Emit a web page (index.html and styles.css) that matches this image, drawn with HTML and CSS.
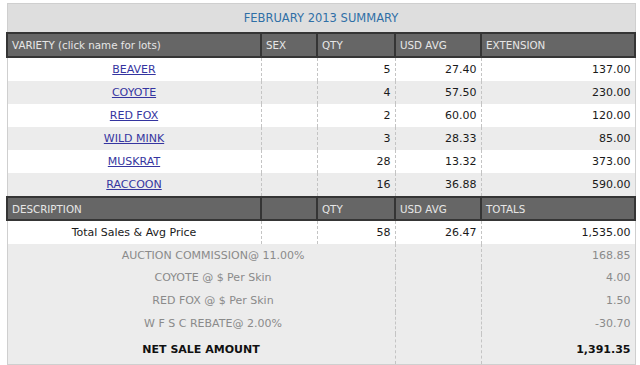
FILE: index.html
```html
<!DOCTYPE html>
<html>
<head>
<meta charset="utf-8">
<link rel="stylesheet" href="styles.css">
</head>
<body>
<div class="page">
<table class="summary">
  <colgroup>
    <col class="c-var"><col class="c-sex"><col class="c-qty"><col class="c-avg"><col class="c-ext">
  </colgroup>
  <tr class="title-row"><td colspan="5">FEBRUARY 2013 SUMMARY</td></tr>
  <tr class="head-row">
    <th>VARIETY (click name for lots)</th><th>SEX</th><th>QTY</th><th>USD AVG</th><th>EXTENSION</th>
  </tr>
  <tr class="row"><td class="name"><a href="#">BEAVER</a></td><td></td><td class="num">5</td><td class="num">27.40</td><td class="num">137.00</td></tr>
  <tr class="row alt"><td class="name"><a href="#">COYOTE</a></td><td></td><td class="num">4</td><td class="num">57.50</td><td class="num">230.00</td></tr>
  <tr class="row"><td class="name"><a href="#">RED FOX</a></td><td></td><td class="num">2</td><td class="num">60.00</td><td class="num">120.00</td></tr>
  <tr class="row alt"><td class="name"><a href="#">WILD MINK</a></td><td></td><td class="num">3</td><td class="num">28.33</td><td class="num">85.00</td></tr>
  <tr class="row"><td class="name"><a href="#">MUSKRAT</a></td><td></td><td class="num">28</td><td class="num">13.32</td><td class="num">373.00</td></tr>
  <tr class="row alt"><td class="name"><a href="#">RACCOON</a></td><td></td><td class="num">16</td><td class="num">36.88</td><td class="num">590.00</td></tr>
  <tr class="head-row head-row2">
    <th>DESCRIPTION</th><th></th><th>QTY</th><th>USD AVG</th><th>TOTALS</th>
  </tr>
  <tr class="row total"><td class="name">Total Sales &amp; Avg Price</td><td></td><td class="num">58</td><td class="num">26.47</td><td class="num">1,535.00</td></tr>
  <tr class="row foot"><td colspan="3" class="fdesc">AUCTION COMMISSION@ 11.00%</td><td></td><td class="num">168.85</td></tr>
  <tr class="row foot"><td colspan="3" class="fdesc">COYOTE @ $ Per Skin</td><td></td><td class="num">4.00</td></tr>
  <tr class="row foot"><td colspan="3" class="fdesc">RED FOX @ $ Per Skin</td><td></td><td class="num">1.50</td></tr>
  <tr class="row foot"><td colspan="3" class="fdesc">W F S C REBATE@ 2.00%</td><td></td><td class="num">-30.70</td></tr>
  <tr class="row foot net"><td colspan="3" class="fdesc">NET SALE AMOUNT</td><td></td><td class="num">1,391.35</td></tr>
</table>
</div>
</body>
</html>
```
FILE: styles.css
```css
html, body {
  margin: 0;
  padding: 0;
  background: #ffffff;
}
body {
  font-family: "DejaVu Sans", Verdana, sans-serif;
  font-size: 11px;
  color: #1a1a1a;
}
.page {
  padding: 3px 6px 0 6px;
}
.summary {
  width: 628px;
  border-collapse: collapse;
  table-layout: fixed;
  border: 1px solid #cfcfcf;
}
.c-var { width: 254px; }
.c-sex { width: 56px; }
.c-qty { width: 78px; }
.c-avg { width: 86px; }
.c-ext { width: 154px; }

.title-row td {
  height: 28px;
  padding: 0;
  background: #dedede;
  color: #2f6fa6;
  text-align: center;
  font-size: 11.5px;
  border-bottom: 1px solid #cfcfcf;
}
.head-row th {
  height: 22px;
  padding: 0 0 0 4px;
  background: #666666;
  color: #e6e6e6;
  font-weight: normal;
  font-size: 10.3px;
  text-align: left;
  border: 2px solid #353535;
}
.head-row2 th {
  height: 21px;
}
.row td {
  height: 23px;
  padding: 0 4px;
  background: #ffffff;
  border-right: 1px dashed #c4c4c4;
  white-space: nowrap;
}
.row td:last-child {
  border-right: 1px solid #cfcfcf;
}
.row.alt td {
  background: #ececec;
}
.row.total td {
  height: 23px;
}
.name {
  text-align: center;
}
.name a {
  color: #3535a0;
  text-decoration: underline;
}
.num {
  text-align: right;
}
.foot td {
  background: #ececec;
  color: #8a8a8a;
  height: 22.6px;
}
.foot .fdesc {
  text-align: center;
  padding-left: 28px;
}
.foot.net td {
  height: 30px;
  color: #111111;
  font-weight: bold;
}
.foot.net .fdesc {
  padding-left: 4px;
}
```
